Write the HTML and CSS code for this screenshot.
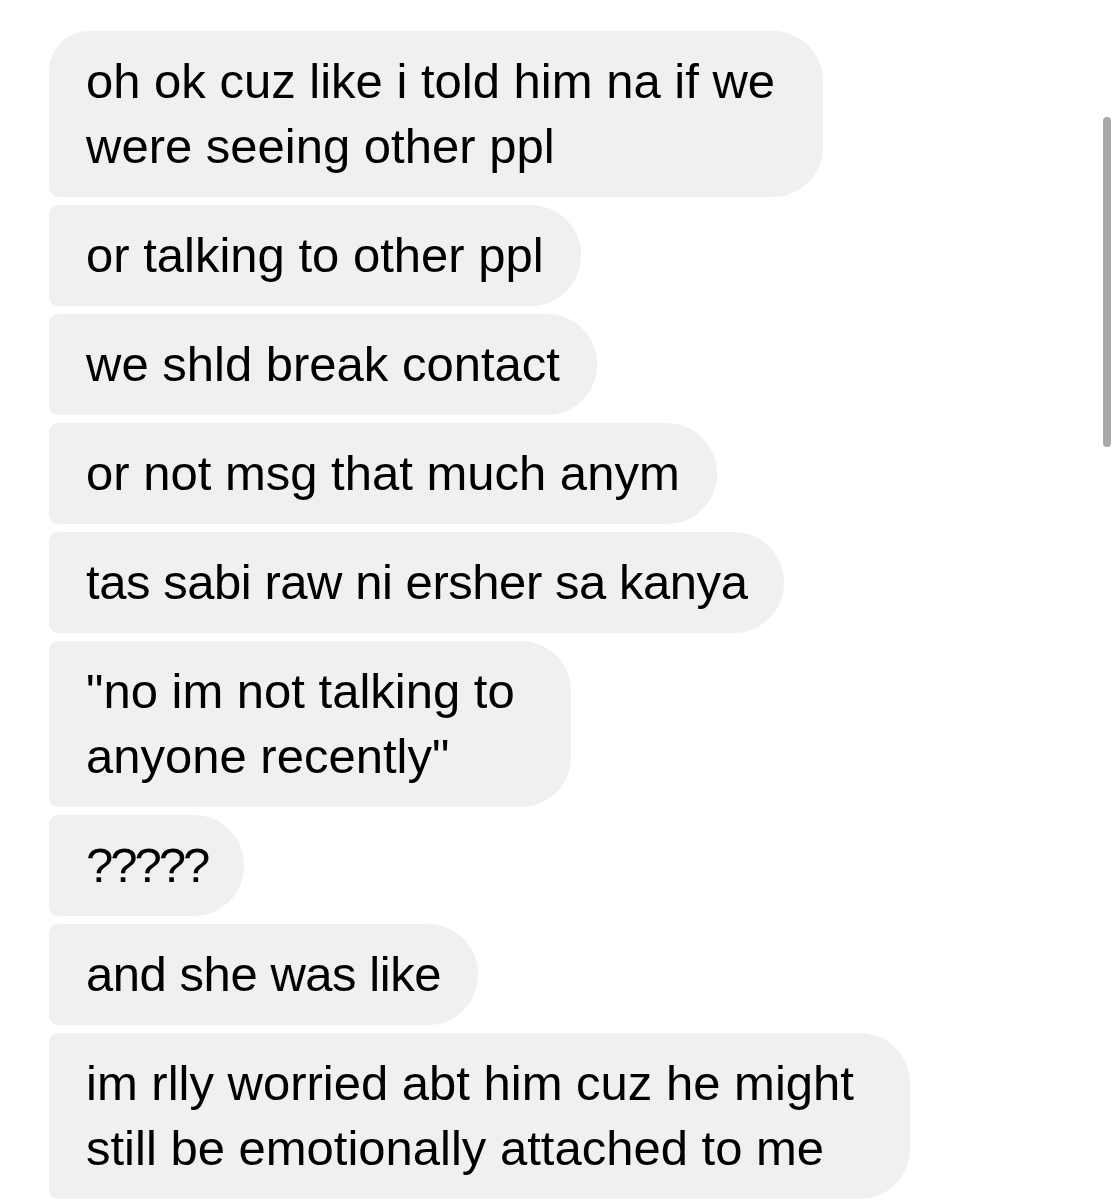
FILE: index.html
```html
<!DOCTYPE html>
<html lang="en">
<head>
<meta charset="utf-8">
<title>Messages</title>
<link rel="stylesheet" href="styles.css">
</head>
<body>
<main class="thread">
  <div class="bubble first multi">oh ok cuz like i told him na if we<br>were seeing other ppl</div>
  <div class="bubble">or talking to other ppl</div>
  <div class="bubble">we shld break contact</div>
  <div class="bubble">or not msg that much anym</div>
  <div class="bubble narrow">tas sabi raw ni ersher sa kanya</div>
  <div class="bubble multi wide">"no im not talking to<br>anyone recently"</div>
  <div class="bubble marks">?????</div>
  <div class="bubble narrow">and she was like</div>
  <div class="bubble multi wide">im rlly worried abt him cuz he might<br>still be emotionally attached to me</div>
</main>
<div class="scrollbar"></div>
</body>
</html>
```
FILE: styles.css
```css
html, body {
  margin: 0;
  padding: 0;
  background: #ffffff;
}
body {
  width: 1120px;
  height: 1200px;
  overflow: hidden;
  position: relative;
}
.thread {
  display: flex;
  flex-direction: column;
  align-items: flex-start;
  gap: 8px;
  padding: 31px 0 0 49px;
}
.bubble {
  background: #f0f0f0;
  color: #000000;
  font-family: "Liberation Sans", Arial, sans-serif;
  font-size: 49px;
  line-height: 65px;
  padding: 18px 37px 18px 37px;
  border-radius: 9px 50px 50px 9px;
  white-space: nowrap;
}
.bubble.multi {
  padding-right: 48px;
}
.bubble.multi.wide {
  padding-right: 56px;
}
.bubble.first {
  border-top-left-radius: 40px;
}
.bubble.narrow {
  letter-spacing: -0.45px;
}
.bubble.marks {
  letter-spacing: -3px;
}
.scrollbar {
  position: absolute;
  left: 1103px;
  top: 117px;
  width: 8px;
  height: 330px;
  border-radius: 4px;
  background: #a9a9a9;
}
```
